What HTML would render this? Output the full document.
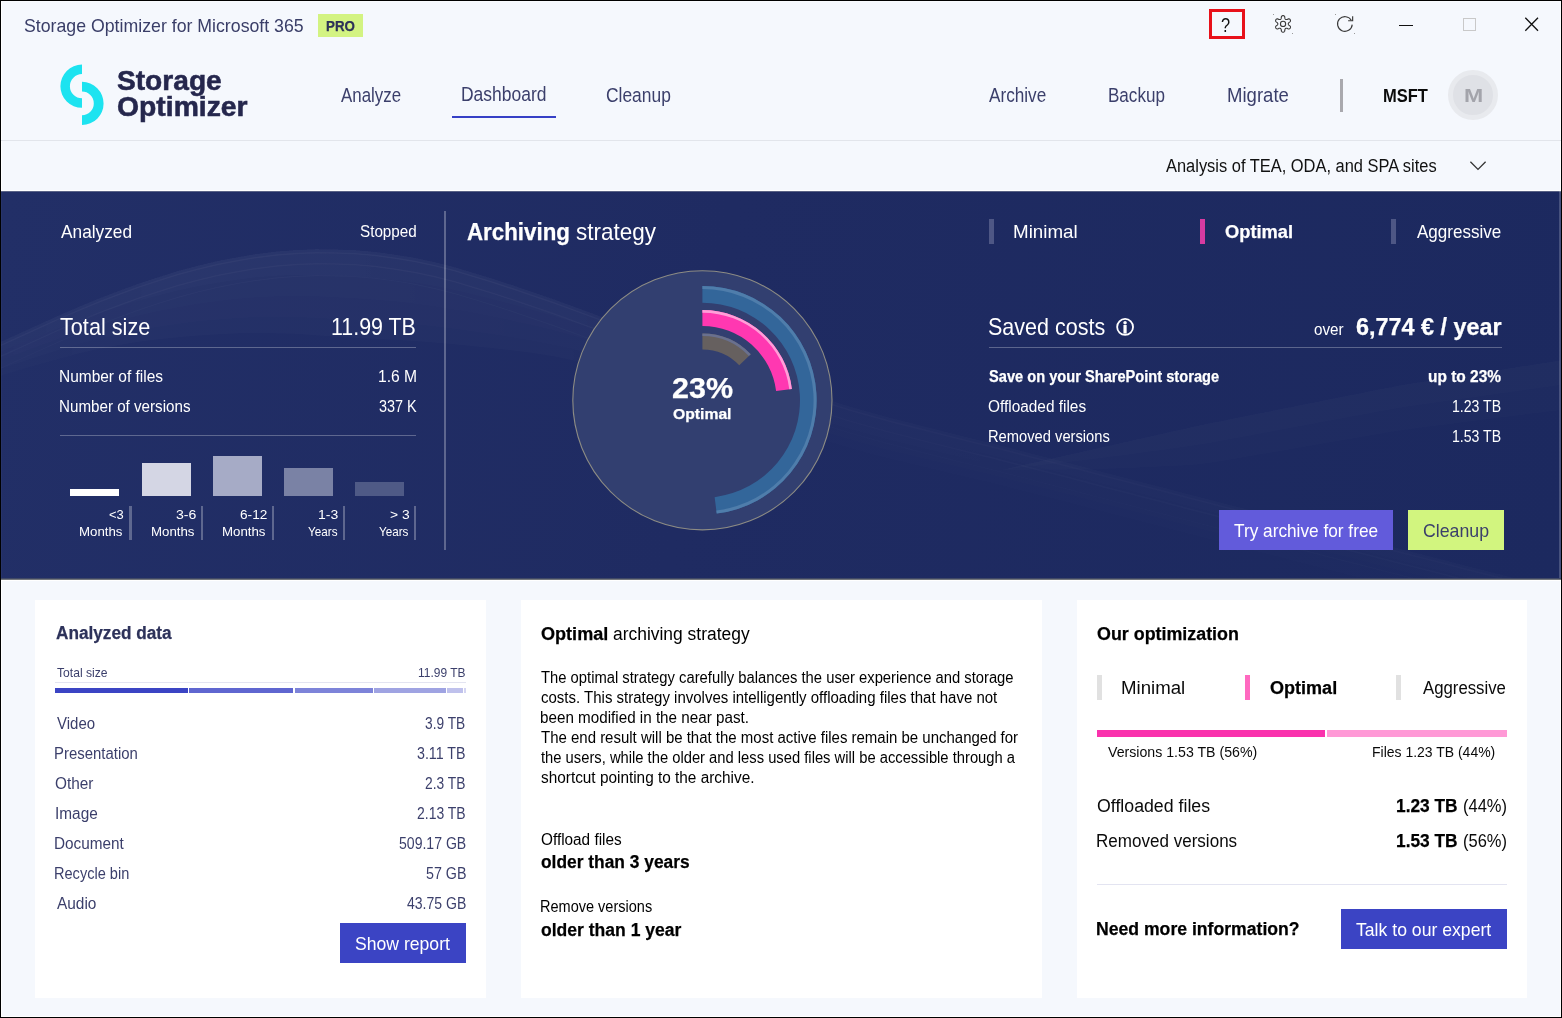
<!DOCTYPE html>
<html lang="en">
<head>
<meta charset="utf-8">
<title>Storage Optimizer for Microsoft 365</title>
<style>
*{box-sizing:border-box;margin:0;padding:0}
html,body{width:1562px;height:1018px;overflow:hidden;background:#f5f8fd}
body{font-family:"Liberation Sans",sans-serif}
#app{position:relative;width:1562px;height:1018px;background:#f5f8fd;overflow:hidden}
#frame{position:absolute;left:0;top:0;width:1562px;height:1018px;border:1px solid #000;z-index:50;pointer-events:none}
.t{position:absolute;white-space:nowrap;transform-origin:0 0;display:block;text-decoration:none}
.abs{position:absolute}
.hero{position:absolute;left:1px;top:191px;width:1560px;height:387px;background:linear-gradient(100deg,#222f67 0%,#1f2b62 45%,#1c295f 100%);overflow:hidden}
.card{position:absolute;background:#fff}
.btn{position:absolute}
</style>
</head>
<body>
<div id="app">
<div id="frame"></div>
<div class="abs" style="left:1px;top:1px;width:1560px;height:190px;border:1px solid #fff;border-top-color:#f9fbfe"></div>
<div class="abs" style="left:1px;top:580px;width:1560px;height:437px;border:1px solid #fff"></div>
<div class="abs" style="left:1px;top:578px;width:1560px;height:1px;background:#3f4866"></div>
<div class="abs" style="left:1px;top:579px;width:1560px;height:1px;background:#74777c"></div>

<header id="titlebar">
<div class="abs" style="left:318px;top:14px;width:45px;height:23px;background:#d3f382"></div>
<div class="abs" style="left:1209px;top:9px;width:36px;height:30px;border:3px solid #e8111a"></div>
<svg class="abs" style="left:1273px;top:14px" width="20" height="20" viewBox="0 0 20 20" fill="none" stroke="#3a3a3a" stroke-width="1.1"><path d="M10.05 1.60 L10.41 1.64 L10.76 1.75 L11.10 1.94 L11.41 2.21 L11.67 2.59 L11.80 3.38 L11.86 4.17 L12.00 4.55 L12.14 4.85 L12.30 5.08 L12.46 5.26 L12.65 5.40 L12.86 5.49 L13.10 5.54 L13.38 5.56 L13.71 5.54 L14.11 5.47 L14.82 5.13 L15.57 4.84 L16.03 4.88 L16.42 5.01 L16.75 5.21 L17.03 5.46 L17.24 5.75 L17.39 6.08 L17.47 6.44 L17.47 6.83 L17.39 7.23 L17.19 7.65 L16.57 8.15 L15.92 8.60 L15.65 8.91 L15.47 9.19 L15.35 9.44 L15.27 9.67 L15.25 9.90 L15.27 10.13 L15.35 10.36 L15.47 10.61 L15.65 10.89 L15.92 11.20 L16.57 11.65 L17.19 12.15 L17.39 12.57 L17.47 12.97 L17.47 13.36 L17.39 13.72 L17.24 14.05 L17.03 14.34 L16.75 14.59 L16.42 14.79 L16.03 14.92 L15.57 14.96 L14.82 14.67 L14.11 14.33 L13.71 14.26 L13.38 14.24 L13.10 14.26 L12.86 14.31 L12.65 14.40 L12.46 14.54 L12.30 14.72 L12.14 14.95 L12.00 15.25 L11.86 15.63 L11.80 16.42 L11.67 17.21 L11.41 17.59 L11.10 17.86 L10.76 18.05 L10.41 18.16 L10.05 18.20 L9.69 18.16 L9.34 18.05 L9.00 17.86 L8.69 17.59 L8.43 17.21 L8.30 16.42 L8.24 15.63 L8.10 15.25 L7.96 14.95 L7.80 14.72 L7.64 14.54 L7.45 14.40 L7.24 14.31 L7.00 14.26 L6.72 14.24 L6.39 14.26 L5.99 14.33 L5.28 14.67 L4.53 14.96 L4.07 14.92 L3.68 14.79 L3.35 14.59 L3.07 14.34 L2.86 14.05 L2.71 13.72 L2.63 13.36 L2.63 12.97 L2.71 12.57 L2.91 12.15 L3.53 11.65 L4.18 11.20 L4.45 10.89 L4.63 10.61 L4.75 10.36 L4.83 10.13 L4.85 9.90 L4.83 9.67 L4.75 9.44 L4.63 9.19 L4.45 8.91 L4.18 8.60 L3.53 8.15 L2.91 7.65 L2.71 7.23 L2.63 6.83 L2.63 6.44 L2.71 6.08 L2.86 5.75 L3.07 5.46 L3.35 5.21 L3.68 5.01 L4.07 4.88 L4.53 4.84 L5.28 5.13 L5.99 5.47 L6.39 5.54 L6.72 5.56 L7.00 5.54 L7.24 5.49 L7.45 5.40 L7.64 5.26 L7.80 5.08 L7.96 4.85 L8.10 4.55 L8.24 4.17 L8.30 3.38 L8.43 2.59 L8.69 2.21 L9.00 1.94 L9.34 1.75 L9.69 1.64 Z" stroke-linejoin="round"/><circle cx="10.05" cy="9.9" r="2.6"/></svg>
<svg class="abs" style="left:1335px;top:14px" width="20" height="20" viewBox="0 0 20 20" fill="none" stroke="#3a3a3a" stroke-width="1.15"><path d="M17.22 10.64 A7.35 7.35 0 1 1 16.39 6.55"/><path d="M13.1 6.75 L17.65 6.75 L17.65 2.3" stroke-linejoin="miter"/></svg>
<div class="abs" style="left:1399px;top:24.5px;width:14px;height:1.2px;background:#111"></div>
<div class="abs" style="left:1463px;top:18px;width:13px;height:13px;border:1px solid #c9c9c9"></div>
<svg class="abs" style="left:1524px;top:16px" width="16" height="16" viewBox="0 0 16 16" fill="none" stroke="#111" stroke-width="1.3"><path d="M1.3 1.7 L14 14.8 M14 1.7 L1.3 14.8"/></svg>
<div class="abs" style="left:1273px;top:14px;width:1px;height:1px;background:#9a9a9a"></div><div class="abs" style="left:1292px;top:33px;width:1px;height:1px;background:#9a9a9a"></div><div class="abs" style="left:1335px;top:14px;width:1px;height:1px;background:#9a9a9a"></div><div class="abs" style="left:1354px;top:33px;width:1px;height:1px;background:#9a9a9a"></div>
<span class="t" style="left:24.25px;top:15.00px;font-size:19px;line-height:21px;color:#3a3e68;transform:scaleX(0.9326)">Storage Optimizer for Microsoft 365</span>
<span class="t" style="left:325.97px;top:18.00px;font-size:14.5px;line-height:16px;color:#2c3158;transform:scaleX(0.9199);font-weight:700;-webkit-text-stroke:0.25px #2c3158">PRO</span>
<span class="t" style="left:1220.79px;top:14.00px;font-size:20.3px;line-height:22px;color:#111;transform:scaleX(0.8079)">?</span>
</header>

<nav id="nav">
<svg class="abs" style="left:56px;top:60px" width="52" height="70" viewBox="56 60 52 70"><path d="M82.00 107.80 A21.60 21.60 0 0 1 82.00 64.60 L82.00 74.10 A12.10 12.10 0 0 0 82.00 98.30 Z" fill="#1de3f0"/><path d="M82.00 81.80 A21.60 21.60 0 0 1 82.00 125.00 L82.00 115.20 A11.80 11.80 0 0 0 82.00 91.60 Z" fill="#1de3f0"/></svg>
<div class="abs" style="left:1448.2px;top:70px;width:50px;height:50px;border-radius:50%;background:#dfe1e6;border:5px solid #e8eaee"></div>
<span class="t" style="left:116.96px;top:63.60px;font-size:28.2px;line-height:32px;color:#25274d;transform:scaleX(0.9976);font-weight:700;-webkit-text-stroke:0.55px #25274d">Storage</span>
<span class="t" style="left:117.11px;top:90.20px;font-size:28.2px;line-height:32px;color:#25274d;transform:scaleX(1.0049);font-weight:700;-webkit-text-stroke:0.55px #25274d">Optimizer</span>
<a class="t" style="left:340.80px;top:85.00px;font-size:19.3px;line-height:21px;color:#3b3f6b;transform:scaleX(0.8751)">Analyze</a>
<a class="t" style="left:461.43px;top:83.80px;font-size:19.3px;line-height:21px;color:#3b3f6b;transform:scaleX(0.9061)">Dashboard</a>
<a class="t" style="left:606.48px;top:85.00px;font-size:19.3px;line-height:21px;color:#3b3f6b;transform:scaleX(0.9030)">Cleanup</a>
<a class="t" style="left:988.60px;top:85.00px;font-size:19.3px;line-height:21px;color:#3b3f6b;transform:scaleX(0.8903)">Archive</a>
<a class="t" style="left:1108.47px;top:85.00px;font-size:19.3px;line-height:21px;color:#3b3f6b;transform:scaleX(0.8843)">Backup</a>
<a class="t" style="left:1226.55px;top:85.00px;font-size:19.3px;line-height:21px;color:#3b3f6b;transform:scaleX(0.9619)">Migrate</a>
<span class="t" style="left:1382.77px;top:85.00px;font-size:18.8px;line-height:21px;color:#0b0b0b;transform:scaleX(0.8786);font-weight:700">MSFT</span>
<span class="t" style="left:1464.16px;top:85.00px;font-size:18.8px;line-height:21px;color:#a3a4ab;transform:scaleX(1.2285);font-weight:700">M</span>
<div class="abs" style="left:452px;top:116px;width:104px;height:2px;background:#3640c6"></div>
<div class="abs" style="left:1340.4px;top:79px;width:2.8px;height:33px;background:#a9a9ae"></div>
</nav>

<div class="abs" style="left:1px;top:140px;width:1560px;height:1px;background:#e2e5eb"></div>
<div id="subbar">
<span class="t" style="left:1166.00px;top:155.00px;font-size:18.8px;line-height:21px;color:#111;transform:scaleX(0.8749)">Analysis of TEA, ODA, and SPA sites</span>
<svg class="abs" style="left:1468px;top:159px" width="20" height="14" viewBox="0 0 20 14" fill="none" stroke="#333" stroke-width="1.3"><path d="M2.4 2.8 L10 10.4 L17.6 2.8"/></svg>
</div>

<section class="hero" id="hero"><svg class="abs" style="left:0;top:0" width="1559" height="387" viewBox="1 191 1559 387"><defs><linearGradient id="fl" x1="0" y1="0" x2="1" y2="0"><stop offset="0" stop-color="#fff" stop-opacity="0.8"/><stop offset="0.12" stop-color="#fff" stop-opacity="1"/><stop offset="0.36" stop-color="#fff" stop-opacity="0.9"/><stop offset="0.5" stop-color="#fff" stop-opacity="0.45"/><stop offset="1" stop-color="#fff" stop-opacity="0.4"/></linearGradient><mask id="mk"><rect x="0" y="180" width="1562" height="420" fill="url(#fl)"/></mask></defs><g mask="url(#mk)"><path d="M0.0 342.0 L19.8 332.9 L39.5 323.9 L59.3 315.1 L79.1 306.5 L98.9 298.3 L118.6 290.7 L138.4 283.5 L158.2 276.9 L177.9 270.8 L197.7 265.4 L217.5 260.8 L237.3 256.9 L257.0 253.7 L276.8 251.3 L296.6 249.7 L316.4 249.0 L336.1 249.2 L355.9 250.1 L375.7 251.8 L395.4 254.4 L415.2 257.7 L435.0 262.0 L454.8 267.1 L474.5 272.9 L494.3 279.0 L514.1 285.5 L533.8 292.2 L553.6 299.1 L573.4 306.2 L593.2 313.5 L612.9 321.0 L632.7 328.6 L652.5 336.3 L672.3 343.9 L692.0 351.4 L711.8 358.7 L731.6 366.0 L751.3 373.1 L771.1 380.1 L790.9 387.0 L810.7 393.8 L830.4 400.3 L850.2 406.4 L870.0 412.1 L889.7 417.5 L909.5 422.6 L929.3 427.5 L949.1 432.5 L968.8 437.4 L988.6 442.3 L1008.4 447.3 L1028.2 452.4 L1047.9 457.5 L1067.7 462.6 L1087.5 467.7 L1107.2 472.9 L1127.0 478.0 L1146.8 483.2 L1166.6 488.3 L1186.3 493.4 L1206.1 498.6 L1225.9 503.7 L1245.6 508.8 L1265.4 513.9 L1285.2 519.0 L1305.0 524.1 L1324.7 529.2 L1344.5 534.2 L1364.3 539.3 L1384.1 544.4 L1403.8 549.4 L1423.6 554.5 L1443.4 559.6 L1463.1 564.7 L1482.9 569.7 L1502.7 574.8 L1522.5 579.9 L1542.2 584.9 L1562.0 590.0 L1562.0 630.0 L1542.2 624.9 L1522.5 619.9 L1502.7 614.8 L1482.9 609.7 L1463.1 604.7 L1443.4 599.6 L1423.6 594.5 L1403.8 589.4 L1384.1 584.4 L1364.3 579.3 L1344.5 574.2 L1324.7 569.2 L1305.0 564.1 L1285.2 559.0 L1265.4 553.9 L1245.6 548.8 L1225.9 543.7 L1206.1 538.6 L1186.3 533.4 L1166.6 528.3 L1146.8 523.2 L1127.0 518.0 L1107.2 512.9 L1087.5 507.7 L1067.7 502.6 L1047.9 497.5 L1028.2 492.5 L1008.4 487.5 L988.6 482.6 L968.8 477.9 L949.1 473.2 L929.3 468.5 L909.5 463.8 L889.7 458.9 L870.0 453.9 L850.2 448.4 L830.4 442.5 L810.7 436.3 L790.9 429.8 L771.1 423.2 L751.3 416.5 L731.6 409.8 L711.8 403.1 L692.0 396.5 L672.3 389.9 L652.5 383.4 L632.7 377.0 L612.9 370.8 L593.2 365.2 L573.4 360.4 L553.6 356.4 L533.8 353.3 L514.1 350.7 L494.3 348.5 L474.5 346.4 L454.8 344.5 L435.0 342.7 L415.2 341.2 L395.4 340.1 L375.7 339.1 L355.9 338.1 L336.1 336.8 L316.4 335.4 L296.6 334.1 L276.8 333.4 L257.0 333.2 L237.3 333.5 L217.5 334.4 L197.7 335.7 L177.9 337.4 L158.2 339.5 L138.4 342.1 L118.6 345.2 L98.9 349.1 L79.1 353.6 L59.3 358.7 L39.5 364.3 L19.8 370.1 L0.0 376.0 Z" fill="#fff" fill-opacity="0.014"/><path d="M0.0 342.0 L19.8 332.9 L39.5 323.9 L59.3 315.1 L79.1 306.5 L98.9 298.3 L118.6 290.7 L138.4 283.5 L158.2 276.9 L177.9 270.8 L197.7 265.4 L217.5 260.8 L237.3 256.9 L257.0 253.7 L276.8 251.3 L296.6 249.7 L316.4 249.0 L336.1 249.2 L355.9 250.1 L375.7 251.8 L395.4 254.4 L415.2 257.7 L435.0 262.0 L454.8 267.1 L474.5 272.9 L494.3 279.0 L514.1 285.5 L533.8 292.2 L553.6 299.1 L573.4 306.2 L593.2 313.5 L612.9 321.0 L632.7 328.6 L652.5 336.3 L672.3 343.9 L692.0 351.4 L711.8 358.7 L731.6 366.0 L751.3 373.1 L771.1 380.1 L790.9 387.0 L810.7 393.8 L830.4 400.3 L850.2 406.4 L870.0 412.1 L889.7 417.5 L909.5 422.6 L929.3 427.5 L949.1 432.5 L968.8 437.4 L988.6 442.3 L1008.4 447.3 L1028.2 452.4 L1047.9 457.5 L1067.7 462.6 L1087.5 467.7 L1107.2 472.9 L1127.0 478.0 L1146.8 483.2 L1166.6 488.3 L1186.3 493.4 L1206.1 498.6 L1225.9 503.7 L1245.6 508.8 L1265.4 513.9 L1285.2 519.0 L1305.0 524.1 L1324.7 529.2 L1344.5 534.2 L1364.3 539.3 L1384.1 544.4 L1403.8 549.4 L1423.6 554.5 L1443.4 559.6 L1463.1 564.7 L1482.9 569.7 L1502.7 574.8 L1522.5 579.9 L1542.2 584.9 L1562.0 590.0 L1562.0 622.0 L1542.2 616.9 L1522.5 611.9 L1502.7 606.8 L1482.9 601.7 L1463.1 596.7 L1443.4 591.6 L1423.6 586.5 L1403.8 581.4 L1384.1 576.4 L1364.3 571.3 L1344.5 566.2 L1324.7 561.2 L1305.0 556.1 L1285.2 551.0 L1265.4 545.9 L1245.6 540.8 L1225.9 535.7 L1206.1 530.6 L1186.3 525.4 L1166.6 520.3 L1146.8 515.2 L1127.0 510.0 L1107.2 504.9 L1087.5 499.7 L1067.7 494.6 L1047.9 489.5 L1028.2 484.5 L1008.4 479.5 L988.6 474.6 L968.8 469.8 L949.1 465.0 L929.3 460.3 L909.5 455.5 L889.7 450.7 L870.0 445.5 L850.2 440.0 L830.4 434.1 L810.7 427.8 L790.9 421.2 L771.1 414.5 L751.3 407.8 L731.6 401.0 L711.8 394.2 L692.0 387.5 L672.3 380.7 L652.5 373.9 L632.7 367.3 L612.9 360.9 L593.2 354.9 L573.4 349.5 L553.6 345.0 L533.8 341.1 L514.1 337.7 L494.3 334.6 L474.5 331.7 L454.8 329.0 L435.0 326.6 L415.2 324.5 L395.4 323.0 L375.7 321.7 L355.9 320.5 L336.1 319.3 L316.4 318.1 L296.6 317.2 L276.8 316.9 L257.0 317.3 L237.3 318.2 L217.5 319.7 L197.7 321.6 L177.9 324.1 L158.2 327.0 L138.4 330.4 L118.6 334.3 L98.9 338.9 L79.1 344.2 L59.3 350.0 L39.5 356.2 L19.8 362.7 L0.0 369.2 Z" fill="#fff" fill-opacity="0.012"/><path d="M0.0 342.0 L19.8 332.9 L39.5 323.9 L59.3 315.1 L79.1 306.5 L98.9 298.3 L118.6 290.7 L138.4 283.5 L158.2 276.9 L177.9 270.8 L197.7 265.4 L217.5 260.8 L237.3 256.9 L257.0 253.7 L276.8 251.3 L296.6 249.7 L316.4 249.0 L336.1 249.2 L355.9 250.1 L375.7 251.8 L395.4 254.4 L415.2 257.7 L435.0 262.0 L454.8 267.1 L474.5 272.9 L494.3 279.0 L514.1 285.5 L533.8 292.2 L553.6 299.1 L573.4 306.2 L593.2 313.5 L612.9 321.0 L632.7 328.6 L652.5 336.3 L672.3 343.9 L692.0 351.4 L711.8 358.7 L731.6 366.0 L751.3 373.1 L771.1 380.1 L790.9 387.0 L810.7 393.8 L830.4 400.3 L850.2 406.4 L870.0 412.1 L889.7 417.5 L909.5 422.6 L929.3 427.5 L949.1 432.5 L968.8 437.4 L988.6 442.3 L1008.4 447.3 L1028.2 452.4 L1047.9 457.5 L1067.7 462.6 L1087.5 467.7 L1107.2 472.9 L1127.0 478.0 L1146.8 483.2 L1166.6 488.3 L1186.3 493.4 L1206.1 498.6 L1225.9 503.7 L1245.6 508.8 L1265.4 513.9 L1285.2 519.0 L1305.0 524.1 L1324.7 529.2 L1344.5 534.2 L1364.3 539.3 L1384.1 544.4 L1403.8 549.4 L1423.6 554.5 L1443.4 559.6 L1463.1 564.7 L1482.9 569.7 L1502.7 574.8 L1522.5 579.9 L1542.2 584.9 L1562.0 590.0 L1562.0 612.0 L1542.2 606.9 L1522.5 601.9 L1502.7 596.8 L1482.9 591.7 L1463.1 586.7 L1443.4 581.6 L1423.6 576.5 L1403.8 571.4 L1384.1 566.4 L1364.3 561.3 L1344.5 556.2 L1324.7 551.2 L1305.0 546.1 L1285.2 541.0 L1265.4 535.9 L1245.6 530.8 L1225.9 525.7 L1206.1 520.6 L1186.3 515.4 L1166.6 510.3 L1146.8 505.2 L1127.0 500.0 L1107.2 494.9 L1087.5 489.7 L1067.7 484.6 L1047.9 479.5 L1028.2 474.4 L1008.4 469.4 L988.6 464.5 L968.8 459.6 L949.1 454.8 L929.3 450.1 L909.5 445.2 L889.7 440.3 L870.0 435.1 L850.2 429.5 L830.4 423.5 L810.7 417.2 L790.9 410.5 L771.1 403.8 L751.3 396.9 L731.6 390.1 L711.8 383.1 L692.0 376.2 L672.3 369.2 L652.5 362.2 L632.7 355.2 L612.9 348.4 L593.2 341.9 L573.4 336.0 L553.6 330.6 L533.8 325.8 L514.1 321.4 L494.3 317.2 L474.5 313.3 L454.8 309.7 L435.0 306.4 L415.2 303.7 L395.4 301.5 L375.7 299.9 L355.9 298.5 L336.1 297.4 L316.4 296.5 L296.6 296.1 L276.8 296.4 L257.0 297.4 L237.3 299.0 L217.5 301.3 L197.7 304.1 L177.9 307.4 L158.2 311.3 L138.4 315.7 L118.6 320.7 L98.9 326.2 L79.1 332.4 L59.3 339.1 L39.5 346.1 L19.8 353.4 L0.0 360.7 Z" fill="#fff" fill-opacity="0.012"/><path d="M0.0 342.0 L19.8 332.9 L39.5 323.9 L59.3 315.1 L79.1 306.5 L98.9 298.3 L118.6 290.7 L138.4 283.5 L158.2 276.9 L177.9 270.8 L197.7 265.4 L217.5 260.8 L237.3 256.9 L257.0 253.7 L276.8 251.3 L296.6 249.7 L316.4 249.0 L336.1 249.2 L355.9 250.1 L375.7 251.8 L395.4 254.4 L415.2 257.7 L435.0 262.0 L454.8 267.1 L474.5 272.9 L494.3 279.0 L514.1 285.5 L533.8 292.2 L553.6 299.1 L573.4 306.2 L593.2 313.5 L612.9 321.0 L632.7 328.6 L652.5 336.3 L672.3 343.9 L692.0 351.4 L711.8 358.7 L731.6 366.0 L751.3 373.1 L771.1 380.1 L790.9 387.0 L810.7 393.8 L830.4 400.3 L850.2 406.4 L870.0 412.1 L889.7 417.5 L909.5 422.6 L929.3 427.5 L949.1 432.5 L968.8 437.4 L988.6 442.3 L1008.4 447.3 L1028.2 452.4 L1047.9 457.5 L1067.7 462.6 L1087.5 467.7 L1107.2 472.9 L1127.0 478.0 L1146.8 483.2 L1166.6 488.3 L1186.3 493.4 L1206.1 498.6 L1225.9 503.7 L1245.6 508.8 L1265.4 513.9 L1285.2 519.0 L1305.0 524.1 L1324.7 529.2 L1344.5 534.2 L1364.3 539.3 L1384.1 544.4 L1403.8 549.4 L1423.6 554.5 L1443.4 559.6 L1463.1 564.7 L1482.9 569.7 L1502.7 574.8 L1522.5 579.9 L1542.2 584.9 L1562.0 590.0 L1562.0 602.0 L1542.2 596.9 L1522.5 591.9 L1502.7 586.8 L1482.9 581.7 L1463.1 576.7 L1443.4 571.6 L1423.6 566.5 L1403.8 561.4 L1384.1 556.4 L1364.3 551.3 L1344.5 546.2 L1324.7 541.2 L1305.0 536.1 L1285.2 531.0 L1265.4 525.9 L1245.6 520.8 L1225.9 515.7 L1206.1 510.6 L1186.3 505.4 L1166.6 500.3 L1146.8 495.2 L1127.0 490.0 L1107.2 484.9 L1087.5 479.7 L1067.7 474.6 L1047.9 469.5 L1028.2 464.4 L1008.4 459.4 L988.6 454.4 L968.8 449.5 L949.1 444.7 L929.3 439.8 L909.5 434.9 L889.7 429.9 L870.0 424.6 L850.2 419.0 L830.4 412.9 L810.7 406.5 L790.9 399.8 L771.1 393.0 L751.3 386.1 L731.6 379.1 L711.8 372.1 L692.0 364.9 L672.3 357.7 L652.5 350.4 L632.7 343.1 L612.9 336.0 L593.2 329.0 L573.4 322.4 L553.6 316.3 L533.8 310.5 L514.1 305.1 L494.3 299.9 L474.5 294.9 L454.8 290.3 L435.0 286.2 L415.2 282.8 L395.4 280.1 L375.7 278.0 L355.9 276.5 L336.1 275.5 L316.4 274.9 L296.6 275.0 L276.8 275.9 L257.0 277.5 L237.3 279.9 L217.5 282.9 L197.7 286.5 L177.9 290.8 L158.2 295.7 L138.4 301.1 L118.6 307.0 L98.9 313.6 L79.1 320.6 L59.3 328.2 L39.5 336.0 L19.8 344.1 L0.0 352.2 Z" fill="#fff" fill-opacity="0.012"/><path d="M0.0 345.0 L19.8 335.9 L39.5 326.9 L59.3 318.1 L79.1 309.5 L98.9 301.3 L118.6 293.7 L138.4 286.5 L158.2 279.9 L177.9 273.8 L197.7 268.4 L217.5 263.8 L237.3 259.9 L257.0 256.7 L276.8 254.3 L296.6 252.7 L316.4 252.0 L336.1 252.2 L355.9 253.1 L375.7 254.8 L395.4 257.4 L415.2 260.7 L435.0 265.0 L454.8 270.1 L474.5 275.9 L494.3 282.0 L514.1 288.5 L533.8 295.2 L553.6 302.1 L573.4 309.2 L593.2 316.5 L612.9 324.0 L632.7 331.6 L652.5 339.3 L672.3 346.9 L692.0 354.4 L711.8 361.7 L731.6 369.0 L751.3 376.1 L771.1 383.1 L790.9 390.0 L810.7 396.8 L830.4 403.3 L850.2 409.4 L870.0 415.1 L889.7 420.5 L909.5 425.6 L929.3 430.5 L949.1 435.5 L968.8 440.4 L988.6 445.3 L1008.4 450.3 L1028.2 455.4 L1047.9 460.5 L1067.7 465.6 L1087.5 470.7 L1107.2 475.9 L1127.0 481.0 L1146.8 486.2 L1166.6 491.3 L1186.3 496.4 L1206.1 501.6 L1225.9 506.7 L1245.6 511.8 L1265.4 516.9 L1285.2 522.0 L1305.0 527.1 L1324.7 532.2 L1344.5 537.2 L1364.3 542.3 L1384.1 547.4 L1403.8 552.4 L1423.6 557.5 L1443.4 562.6 L1463.1 567.7 L1482.9 572.7 L1502.7 577.8 L1522.5 582.9 L1542.2 587.9 L1562.0 593.0 L1562.0 594.5 L1542.2 589.4 L1522.5 584.4 L1502.7 579.3 L1482.9 574.2 L1463.1 569.2 L1443.4 564.1 L1423.6 559.0 L1403.8 553.9 L1384.1 548.9 L1364.3 543.8 L1344.5 538.7 L1324.7 533.7 L1305.0 528.6 L1285.2 523.5 L1265.4 518.4 L1245.6 513.3 L1225.9 508.2 L1206.1 503.1 L1186.3 497.9 L1166.6 492.8 L1146.8 487.7 L1127.0 482.5 L1107.2 477.4 L1087.5 472.2 L1067.7 467.1 L1047.9 462.0 L1028.2 456.9 L1008.4 451.8 L988.6 446.8 L968.8 441.9 L949.1 437.0 L929.3 432.0 L909.5 427.1 L889.7 422.0 L870.0 416.6 L850.2 410.9 L830.4 404.8 L810.7 398.3 L790.9 391.5 L771.1 384.6 L751.3 377.6 L731.6 370.5 L711.8 363.2 L692.0 355.9 L672.3 348.4 L652.5 340.8 L632.7 333.1 L612.9 325.5 L593.2 318.0 L573.4 310.7 L553.6 303.6 L533.8 296.7 L514.1 290.0 L494.3 283.5 L474.5 277.4 L454.8 271.6 L435.0 266.5 L415.2 262.2 L395.4 258.9 L375.7 256.3 L355.9 254.6 L336.1 253.7 L316.4 253.5 L296.6 254.2 L276.8 255.8 L257.0 258.2 L237.3 261.4 L217.5 265.3 L197.7 269.9 L177.9 275.3 L158.2 281.4 L138.4 288.0 L118.6 295.2 L98.9 302.8 L79.1 311.0 L59.3 319.6 L39.5 328.4 L19.8 337.4 L0.0 346.5 Z" fill="#fff" fill-opacity="0.035"/><path d="M0.0 356.0 L19.8 346.9 L39.5 337.9 L59.3 329.1 L79.1 320.5 L98.9 312.3 L118.6 304.7 L138.4 297.5 L158.2 290.9 L177.9 284.8 L197.7 279.4 L217.5 274.8 L237.3 270.9 L257.0 267.7 L276.8 265.3 L296.6 263.7 L316.4 263.0 L336.1 263.2 L355.9 264.1 L375.7 265.8 L395.4 268.4 L415.2 271.7 L435.0 276.0 L454.8 281.1 L474.5 286.9 L494.3 293.0 L514.1 299.5 L533.8 306.2 L553.6 313.1 L573.4 320.2 L593.2 327.5 L612.9 335.0 L632.7 342.6 L652.5 350.3 L672.3 357.9 L692.0 365.4 L711.8 372.7 L731.6 380.0 L751.3 387.1 L771.1 394.1 L790.9 401.0 L810.7 407.8 L830.4 414.3 L850.2 420.4 L870.0 426.1 L889.7 431.5 L909.5 436.6 L929.3 441.5 L949.1 446.5 L968.8 451.4 L988.6 456.3 L1008.4 461.3 L1028.2 466.4 L1047.9 471.5 L1067.7 476.6 L1087.5 481.7 L1107.2 486.9 L1127.0 492.0 L1146.8 497.2 L1166.6 502.3 L1186.3 507.4 L1206.1 512.6 L1225.9 517.7 L1245.6 522.8 L1265.4 527.9 L1285.2 533.0 L1305.0 538.1 L1324.7 543.2 L1344.5 548.2 L1364.3 553.3 L1384.1 558.4 L1403.8 563.4 L1423.6 568.5 L1443.4 573.6 L1463.1 578.7 L1482.9 583.7 L1502.7 588.8 L1522.5 593.9 L1542.2 598.9 L1562.0 604.0 L1562.0 605.5 L1542.2 600.4 L1522.5 595.4 L1502.7 590.3 L1482.9 585.2 L1463.1 580.2 L1443.4 575.1 L1423.6 570.0 L1403.8 564.9 L1384.1 559.9 L1364.3 554.8 L1344.5 549.7 L1324.7 544.7 L1305.0 539.6 L1285.2 534.5 L1265.4 529.4 L1245.6 524.3 L1225.9 519.2 L1206.1 514.1 L1186.3 508.9 L1166.6 503.8 L1146.8 498.7 L1127.0 493.5 L1107.2 488.4 L1087.5 483.2 L1067.7 478.1 L1047.9 473.0 L1028.2 467.9 L1008.4 462.8 L988.6 457.8 L968.8 452.9 L949.1 448.0 L929.3 443.0 L909.5 438.1 L889.7 433.0 L870.0 427.6 L850.2 421.9 L830.4 415.8 L810.7 409.3 L790.9 402.5 L771.1 395.6 L751.3 388.6 L731.6 381.5 L711.8 374.2 L692.0 366.9 L672.3 359.4 L652.5 351.8 L632.7 344.1 L612.9 336.5 L593.2 329.0 L573.4 321.7 L553.6 314.6 L533.8 307.7 L514.1 301.0 L494.3 294.5 L474.5 288.4 L454.8 282.6 L435.0 277.5 L415.2 273.2 L395.4 269.9 L375.7 267.3 L355.9 265.6 L336.1 264.7 L316.4 264.5 L296.6 265.2 L276.8 266.8 L257.0 269.2 L237.3 272.4 L217.5 276.3 L197.7 280.9 L177.9 286.3 L158.2 292.4 L138.4 299.0 L118.6 306.2 L98.9 313.8 L79.1 322.0 L59.3 330.6 L39.5 339.4 L19.8 348.4 L0.0 357.5 Z" fill="#fff" fill-opacity="0.03"/><path d="M0.0 368.0 L19.8 358.9 L39.5 349.9 L59.3 341.1 L79.1 332.5 L98.9 324.3 L118.6 316.7 L138.4 309.5 L158.2 302.9 L177.9 296.8 L197.7 291.4 L217.5 286.8 L237.3 282.9 L257.0 279.7 L276.8 277.3 L296.6 275.7 L316.4 275.0 L336.1 275.2 L355.9 276.1 L375.7 277.8 L395.4 280.4 L415.2 283.7 L435.0 288.0 L454.8 293.1 L474.5 298.9 L494.3 305.0 L514.1 311.5 L533.8 318.2 L553.6 325.1 L573.4 332.2 L593.2 339.5 L612.9 347.0 L632.7 354.6 L652.5 362.3 L672.3 369.9 L692.0 377.4 L711.8 384.7 L731.6 392.0 L751.3 399.1 L771.1 406.1 L790.9 413.0 L810.7 419.8 L830.4 426.3 L850.2 432.4 L870.0 438.1 L889.7 443.5 L909.5 448.6 L929.3 453.5 L949.1 458.5 L968.8 463.4 L988.6 468.3 L1008.4 473.3 L1028.2 478.4 L1047.9 483.5 L1067.7 488.6 L1087.5 493.7 L1107.2 498.9 L1127.0 504.0 L1146.8 509.2 L1166.6 514.3 L1186.3 519.4 L1206.1 524.6 L1225.9 529.7 L1245.6 534.8 L1265.4 539.9 L1285.2 545.0 L1305.0 550.1 L1324.7 555.2 L1344.5 560.2 L1364.3 565.3 L1384.1 570.4 L1403.8 575.4 L1423.6 580.5 L1443.4 585.6 L1463.1 590.7 L1482.9 595.7 L1502.7 600.8 L1522.5 605.9 L1542.2 610.9 L1562.0 616.0 L1562.0 617.2 L1542.2 612.1 L1522.5 607.1 L1502.7 602.0 L1482.9 596.9 L1463.1 591.9 L1443.4 586.8 L1423.6 581.7 L1403.8 576.6 L1384.1 571.6 L1364.3 566.5 L1344.5 561.4 L1324.7 556.4 L1305.0 551.3 L1285.2 546.2 L1265.4 541.1 L1245.6 536.0 L1225.9 530.9 L1206.1 525.8 L1186.3 520.6 L1166.6 515.5 L1146.8 510.4 L1127.0 505.2 L1107.2 500.1 L1087.5 494.9 L1067.7 489.8 L1047.9 484.7 L1028.2 479.6 L1008.4 474.5 L988.6 469.5 L968.8 464.6 L949.1 459.7 L929.3 454.7 L909.5 449.8 L889.7 444.7 L870.0 439.3 L850.2 433.6 L830.4 427.5 L810.7 421.0 L790.9 414.2 L771.1 407.3 L751.3 400.3 L731.6 393.2 L711.8 385.9 L692.0 378.6 L672.3 371.1 L652.5 363.5 L632.7 355.8 L612.9 348.2 L593.2 340.7 L573.4 333.4 L553.6 326.3 L533.8 319.4 L514.1 312.7 L494.3 306.2 L474.5 300.1 L454.8 294.3 L435.0 289.2 L415.2 284.9 L395.4 281.6 L375.7 279.0 L355.9 277.3 L336.1 276.4 L316.4 276.2 L296.6 276.9 L276.8 278.5 L257.0 280.9 L237.3 284.1 L217.5 288.0 L197.7 292.6 L177.9 298.0 L158.2 304.1 L138.4 310.7 L118.6 317.9 L98.9 325.5 L79.1 333.7 L59.3 342.3 L39.5 351.1 L19.8 360.1 L0.0 369.2 Z" fill="#fff" fill-opacity="0.025"/></g><path d="M1000.0 470.0 L1007.1 468.4 L1014.2 466.8 L1021.3 465.2 L1028.5 463.6 L1035.6 462.0 L1042.7 460.4 L1049.8 458.8 L1056.9 457.2 L1064.0 455.6 L1071.1 454.0 L1078.3 452.4 L1085.4 450.8 L1092.5 449.2 L1099.6 447.6 L1106.7 446.0 L1113.8 444.4 L1120.9 442.8 L1128.1 441.2 L1135.2 439.6 L1142.3 438.0 L1149.4 436.4 L1156.5 434.8 L1163.6 433.2 L1170.7 431.6 L1177.8 430.0 L1185.0 428.4 L1192.1 426.8 L1199.2 425.3 L1206.3 423.8 L1213.4 422.3 L1220.5 420.9 L1227.6 419.5 L1234.8 418.0 L1241.9 416.6 L1249.0 415.2 L1256.1 413.8 L1263.2 412.4 L1270.3 410.9 L1277.4 409.5 L1284.6 408.1 L1291.7 406.7 L1298.8 405.2 L1305.9 403.8 L1313.0 402.4 L1320.1 401.0 L1327.2 399.6 L1334.4 398.1 L1341.5 396.7 L1348.6 395.3 L1355.7 393.9 L1362.8 392.4 L1369.9 391.0 L1377.0 389.6 L1384.2 388.2 L1391.3 386.9 L1398.4 385.5 L1405.5 384.3 L1412.6 383.1 L1419.7 382.0 L1426.8 380.9 L1433.9 379.8 L1441.1 378.7 L1448.2 377.6 L1455.3 376.5 L1462.4 375.4 L1469.5 374.3 L1476.6 373.2 L1483.7 372.1 L1490.9 371.0 L1498.0 369.9 L1505.1 368.8 L1512.2 367.7 L1519.3 366.6 L1526.4 365.5 L1533.5 364.4 L1540.7 363.3 L1547.8 362.2 L1554.9 361.1 L1562.0 360.0 L1562.0 410.0 L1554.9 410.9 L1547.8 411.8 L1540.7 412.7 L1533.5 413.6 L1526.4 414.5 L1519.3 415.4 L1512.2 416.3 L1505.1 417.2 L1498.0 418.1 L1490.9 419.0 L1483.7 419.9 L1476.6 420.8 L1469.5 421.7 L1462.4 422.6 L1455.3 423.5 L1448.2 424.4 L1441.1 425.3 L1433.9 426.2 L1426.8 427.1 L1419.7 428.1 L1412.6 429.0 L1405.5 430.0 L1398.4 431.0 L1391.3 432.1 L1384.2 433.3 L1377.0 434.5 L1369.9 435.7 L1362.8 436.9 L1355.7 438.2 L1348.6 439.4 L1341.5 440.6 L1334.4 441.8 L1327.2 443.1 L1320.1 444.3 L1313.0 445.5 L1305.9 446.7 L1298.8 448.0 L1291.7 449.2 L1284.6 450.4 L1277.4 451.7 L1270.3 452.9 L1263.2 454.1 L1256.1 455.3 L1249.0 456.6 L1241.9 457.8 L1234.8 459.0 L1227.6 460.2 L1220.5 461.4 L1213.4 462.5 L1206.3 463.5 L1199.2 464.4 L1192.1 465.0 L1185.0 465.5 L1177.8 466.0 L1170.7 466.3 L1163.6 466.6 L1156.5 467.0 L1149.4 467.3 L1142.3 467.6 L1135.2 467.9 L1128.1 468.2 L1120.9 468.5 L1113.8 468.8 L1106.7 469.1 L1099.6 469.3 L1092.5 469.4 L1085.4 469.5 L1078.3 469.6 L1071.1 469.6 L1064.0 469.7 L1056.9 469.7 L1049.8 469.8 L1042.7 469.8 L1035.6 469.8 L1028.5 469.9 L1021.3 469.9 L1014.2 469.9 L1007.1 470.0 L1000.0 470.0 Z" fill="#fff" fill-opacity="0.012"/><path d="M1000.0 470.0 L1007.1 468.4 L1014.2 466.8 L1021.3 465.2 L1028.5 463.6 L1035.6 462.0 L1042.7 460.4 L1049.8 458.8 L1056.9 457.2 L1064.0 455.6 L1071.1 454.0 L1078.3 452.4 L1085.4 450.8 L1092.5 449.2 L1099.6 447.6 L1106.7 446.0 L1113.8 444.4 L1120.9 442.8 L1128.1 441.2 L1135.2 439.6 L1142.3 438.0 L1149.4 436.4 L1156.5 434.8 L1163.6 433.2 L1170.7 431.6 L1177.8 430.0 L1185.0 428.4 L1192.1 426.8 L1199.2 425.3 L1206.3 423.8 L1213.4 422.3 L1220.5 420.9 L1227.6 419.5 L1234.8 418.0 L1241.9 416.6 L1249.0 415.2 L1256.1 413.8 L1263.2 412.4 L1270.3 410.9 L1277.4 409.5 L1284.6 408.1 L1291.7 406.7 L1298.8 405.2 L1305.9 403.8 L1313.0 402.4 L1320.1 401.0 L1327.2 399.6 L1334.4 398.1 L1341.5 396.7 L1348.6 395.3 L1355.7 393.9 L1362.8 392.4 L1369.9 391.0 L1377.0 389.6 L1384.2 388.2 L1391.3 386.9 L1398.4 385.5 L1405.5 384.3 L1412.6 383.1 L1419.7 382.0 L1426.8 380.9 L1433.9 379.8 L1441.1 378.7 L1448.2 377.6 L1455.3 376.5 L1462.4 375.4 L1469.5 374.3 L1476.6 373.2 L1483.7 372.1 L1490.9 371.0 L1498.0 369.9 L1505.1 368.8 L1512.2 367.7 L1519.3 366.6 L1526.4 365.5 L1533.5 364.4 L1540.7 363.3 L1547.8 362.2 L1554.9 361.1 L1562.0 360.0 L1562.0 385.0 L1554.9 386.0 L1547.8 387.0 L1540.7 388.0 L1533.5 389.0 L1526.4 390.0 L1519.3 391.0 L1512.2 392.0 L1505.1 393.0 L1498.0 394.0 L1490.9 395.0 L1483.7 396.0 L1476.6 397.0 L1469.5 398.0 L1462.4 399.0 L1455.3 400.0 L1448.2 401.0 L1441.1 402.0 L1433.9 403.0 L1426.8 404.0 L1419.7 405.0 L1412.6 406.1 L1405.5 407.1 L1398.4 408.3 L1391.3 409.5 L1384.2 410.8 L1377.0 412.1 L1369.9 413.4 L1362.8 414.7 L1355.7 416.0 L1348.6 417.3 L1341.5 418.7 L1334.4 420.0 L1327.2 421.3 L1320.1 422.6 L1313.0 424.0 L1305.9 425.3 L1298.8 426.6 L1291.7 427.9 L1284.6 429.3 L1277.4 430.6 L1270.3 431.9 L1263.2 433.2 L1256.1 434.6 L1249.0 435.9 L1241.9 437.2 L1234.8 438.5 L1227.6 439.8 L1220.5 441.2 L1213.4 442.4 L1206.3 443.7 L1199.2 444.8 L1192.1 445.9 L1185.0 447.0 L1177.8 448.0 L1170.7 448.9 L1163.6 449.9 L1156.5 450.9 L1149.4 451.8 L1142.3 452.8 L1135.2 453.8 L1128.1 454.7 L1120.9 455.7 L1113.8 456.6 L1106.7 457.5 L1099.6 458.4 L1092.5 459.3 L1085.4 460.2 L1078.3 461.0 L1071.1 461.8 L1064.0 462.6 L1056.9 463.5 L1049.8 464.3 L1042.7 465.1 L1035.6 465.9 L1028.5 466.7 L1021.3 467.5 L1014.2 468.4 L1007.1 469.2 L1000.0 470.0 Z" fill="#fff" fill-opacity="0.012"/></svg><div class="abs" style="left:0;top:0;width:1560px;height:1px;background:rgba(160,165,175,0.45)"></div><div class="abs" style="left:1557.6px;top:0;width:2.4px;height:387px;background:rgba(255,255,255,0.19)"></div><div class="abs" style="left:0;top:0;width:1px;height:387px;background:rgba(255,255,255,0.03)"></div></section>
<section id="hero-left">
<span class="t" style="left:61.40px;top:220.80px;font-size:19px;line-height:21px;color:#fff;transform:scaleX(0.9093)">Analyzed</span>
<span class="t" style="left:359.92px;top:223.20px;font-size:16px;line-height:17px;color:#fff;transform:scaleX(0.9517)">Stopped</span>
<span class="t" style="left:60.46px;top:313.70px;font-size:23.2px;line-height:26px;color:#fff;transform:scaleX(0.9339)">Total size</span>
<span class="t" style="left:330.96px;top:313.70px;font-size:23.2px;line-height:26px;color:#fff;transform:scaleX(0.9233)">11.99 TB</span>
<span class="t" style="left:58.99px;top:368.40px;font-size:16px;line-height:17px;color:#fff;transform:scaleX(0.9665)">Number of files</span>
<span class="t" style="left:378.12px;top:368.40px;font-size:16px;line-height:17px;color:#fff;transform:scaleX(0.9779)">1.6 M</span>
<span class="t" style="left:59.02px;top:398.20px;font-size:16px;line-height:17px;color:#fff;transform:scaleX(0.9477)">Number of versions</span>
<span class="t" style="left:378.65px;top:398.20px;font-size:16px;line-height:17px;color:#fff;transform:scaleX(0.9018)">337 K</span>
<span class="t" style="left:109.38px;top:507.90px;font-size:12.6px;line-height:14px;color:#fff;transform:scaleX(1.0258)">&lt;3</span>
<span class="t" style="left:79.15px;top:525.00px;font-size:12.6px;line-height:14px;color:#fff;transform:scaleX(1.0534)">Months</span>
<span class="t" style="left:175.50px;top:507.90px;font-size:12.6px;line-height:14px;color:#fff;transform:scaleX(1.1186)">3-6</span>
<span class="t" style="left:151.15px;top:525.00px;font-size:12.6px;line-height:14px;color:#fff;transform:scaleX(1.0534)">Months</span>
<span class="t" style="left:239.95px;top:507.90px;font-size:12.6px;line-height:14px;color:#fff;transform:scaleX(1.0828)">6-12</span>
<span class="t" style="left:222.15px;top:525.00px;font-size:12.6px;line-height:14px;color:#fff;transform:scaleX(1.0534)">Months</span>
<span class="t" style="left:317.95px;top:507.90px;font-size:12.6px;line-height:14px;color:#fff;transform:scaleX(1.1102)">1-3</span>
<span class="t" style="left:307.97px;top:525.00px;font-size:12.6px;line-height:14px;color:#fff;transform:scaleX(0.9305)">Years</span>
<span class="t" style="left:389.54px;top:507.90px;font-size:12.6px;line-height:14px;color:#fff;transform:scaleX(1.0979)">&gt; 3</span>
<span class="t" style="left:378.97px;top:525.00px;font-size:12.6px;line-height:14px;color:#fff;transform:scaleX(0.9273)">Years</span>
<div class="abs" style="left:60.20px;top:347.00px;width:355.80px;height:1.00px;background:rgba(255,255,255,0.28)"></div>
<div class="abs" style="left:60.20px;top:435.00px;width:355.80px;height:1.00px;background:rgba(255,255,255,0.28)"></div>
<div class="abs" style="left:69.80px;top:489.00px;width:49.20px;height:7.00px;background:#ffffff"></div>
<div class="abs" style="left:141.90px;top:462.80px;width:49.20px;height:33.20px;background:#d4d6e4"></div>
<div class="abs" style="left:212.90px;top:455.80px;width:49.20px;height:40.20px;background:#a6abc6"></div>
<div class="abs" style="left:283.90px;top:468.00px;width:49.10px;height:28.00px;background:#7a82a5"></div>
<div class="abs" style="left:354.90px;top:482.00px;width:49.10px;height:14.00px;background:#4f5a86"></div>
<div class="abs" style="left:129.30px;top:505.80px;width:2.30px;height:34.20px;background:rgba(255,255,255,0.28)"></div>
<div class="abs" style="left:200.50px;top:505.80px;width:2.30px;height:34.20px;background:rgba(255,255,255,0.28)"></div>
<div class="abs" style="left:271.50px;top:505.80px;width:2.30px;height:34.20px;background:rgba(255,255,255,0.28)"></div>
<div class="abs" style="left:342.50px;top:505.80px;width:2.30px;height:34.20px;background:rgba(255,255,255,0.28)"></div>
<div class="abs" style="left:413.50px;top:505.80px;width:2.30px;height:34.20px;background:rgba(255,255,255,0.28)"></div>
<div class="abs" style="left:444.00px;top:211.30px;width:2.00px;height:338.70px;background:rgba(255,255,255,0.28)"></div>
</section>
<section id="hero-mid">
<svg class="abs" style="left:560px;top:260px" width="290" height="280" viewBox="560 260 290 280">
<circle cx="702.4" cy="400.3" r="129.6" fill="#323f70" stroke="#8d8c84" stroke-width="1.1"/>
<path d="M702.40 286.10 A114.20 114.20 0 0 1 716.71 513.60 L714.63 497.13 A97.60 97.60 0 0 0 702.40 302.70 Z" fill="#33669a"/>
<path d="M702.40 286.10 A114.20 114.20 0 0 1 716.71 513.60 L716.34 510.62 A111.20 111.20 0 0 0 702.40 289.10 Z" fill="#4f7dab"/>
<path d="M702.40 310.10 A90.20 90.20 0 0 1 791.89 388.99 L776.11 390.99 A74.30 74.30 0 0 0 702.40 326.00 Z" fill="#ff38b1"/>
<path d="M702.40 310.10 A90.20 90.20 0 0 1 791.89 388.99 L789.31 389.32 A87.60 87.60 0 0 0 702.40 312.70 Z" fill="#ff9fd8"/>
<path d="M702.40 333.50 A66.80 66.80 0 0 1 750.77 354.23 L739.26 365.20 A50.90 50.90 0 0 0 702.40 349.40 Z" fill="#66605f"/>
<path d="M702.40 333.50 A66.80 66.80 0 0 1 750.77 354.23 L748.89 356.03 A64.20 64.20 0 0 0 702.40 336.10 Z" fill="#69708f"/>
</svg>
<span class="t" style="left:466.95px;top:218.80px;font-size:23.2px;line-height:26px;color:#fff;transform:scaleX(0.9625);font-weight:700;-webkit-text-stroke:0.25px #fff">Archiving</span>
<span class="t" style="left:575.85px;top:218.80px;font-size:23.2px;line-height:26px;color:#fff;transform:scaleX(0.9700)">strategy</span>
<span class="t" style="left:671.65px;top:370.60px;font-size:30px;line-height:33px;color:#fff;transform:scaleX(1.0156);font-weight:700;-webkit-text-stroke:0.25px #fff">23%</span>
<span class="t" style="left:673.31px;top:404.90px;font-size:15.4px;line-height:17px;color:#fff;transform:scaleX(1.0208);font-weight:700;-webkit-text-stroke:0.25px #fff">Optimal</span>
</section>
<section id="hero-right">
<div class="abs" style="left:988.60px;top:219.00px;width:5.40px;height:24.70px;background:#4e5785"></div>
<div class="abs" style="left:1199.80px;top:219.00px;width:5.40px;height:24.70px;background:#d63ba1"></div>
<div class="abs" style="left:1391.00px;top:219.00px;width:5.20px;height:24.70px;background:#4e5785"></div>
<div class="abs" style="left:988.60px;top:347.00px;width:513.40px;height:1.00px;background:rgba(255,255,255,0.28)"></div>
<svg class="abs" style="left:1114px;top:316px" width="22" height="22" viewBox="1114 316 22 22"><circle cx="1125.1" cy="326.9" r="7.95" fill="none" stroke="#fff" stroke-width="1.8"/><circle cx="1125.05" cy="322.75" r="1.75" fill="#fff"/><rect x="1123.45" y="325" width="3.2" height="8.6" fill="#fff"/></svg>
<div class="abs" style="left:1219.20px;top:510.00px;width:173.90px;height:39.80px;background:#625bdb"></div>
<div class="abs" style="left:1408.20px;top:510.00px;width:96.00px;height:39.80px;background:#d2f57f"></div>
<span class="t" style="left:1012.83px;top:220.60px;font-size:19px;line-height:21px;color:#fff;transform:scaleX(0.9886)">Minimal</span>
<span class="t" style="left:1224.53px;top:220.60px;font-size:19px;line-height:21px;color:#fff;transform:scaleX(0.9621);font-weight:700;-webkit-text-stroke:0.25px #fff">Optimal</span>
<span class="t" style="left:1417.30px;top:220.60px;font-size:19px;line-height:21px;color:#fff;transform:scaleX(0.8968)">Aggressive</span>
<span class="t" style="left:988.13px;top:313.80px;font-size:23.2px;line-height:26px;color:#fff;transform:scaleX(0.9277)">Saved costs</span>
<span class="t" style="left:1313.52px;top:320.50px;font-size:16px;line-height:17px;color:#fff;transform:scaleX(0.9526)">over</span>
<span class="t" style="left:1356.27px;top:313.80px;font-size:23.2px;line-height:26px;color:#fff;transform:scaleX(1.0082);font-weight:700;-webkit-text-stroke:0.25px #fff">6,774 € / year</span>
<span class="t" style="left:988.57px;top:368.30px;font-size:16px;line-height:17px;color:#fff;transform:scaleX(0.9144);font-weight:700;-webkit-text-stroke:0.25px #fff">Save on your SharePoint storage</span>
<span class="t" style="left:1428.07px;top:368.30px;font-size:16px;line-height:17px;color:#fff;transform:scaleX(0.9667);font-weight:700;-webkit-text-stroke:0.25px #fff">up to 23%</span>
<span class="t" style="left:988.08px;top:397.80px;font-size:16px;line-height:17px;color:#fff;transform:scaleX(0.9619)">Offloaded files</span>
<span class="t" style="left:1452.22px;top:397.80px;font-size:16px;line-height:17px;color:#fff;transform:scaleX(0.8793)">1.23 TB</span>
<span class="t" style="left:987.65px;top:427.80px;font-size:16px;line-height:17px;color:#fff;transform:scaleX(0.9193)">Removed versions</span>
<span class="t" style="left:1452.22px;top:427.80px;font-size:16px;line-height:17px;color:#fff;transform:scaleX(0.8793)">1.53 TB</span>
<span class="t" style="left:1234.13px;top:520.20px;font-size:19px;line-height:21px;color:#fff;transform:scaleX(0.9077)">Try archive for free</span>
<span class="t" style="left:1422.57px;top:520.20px;font-size:19px;line-height:21px;color:#3b3f6b;transform:scaleX(0.9332)">Cleanup</span>
</section>

<section class="card" id="card1" style="left:35px;top:600px;width:451px;height:398px"></section>
<section id="card1c">
<div class="abs" style="left:55.30px;top:682.30px;width:410.30px;height:1.00px;background:#e3e4f1"></div>
<div class="abs" style="left:55.30px;top:688.00px;width:132.50px;height:5.20px;background:#3b44c4"></div>
<div class="abs" style="left:189.30px;top:688.00px;width:104.20px;height:5.20px;background:#5f66d0"></div>
<div class="abs" style="left:295.40px;top:688.00px;width:77.40px;height:5.20px;background:#7d83d9"></div>
<div class="abs" style="left:374.30px;top:688.00px;width:71.30px;height:5.20px;background:#9fa3e2"></div>
<div class="abs" style="left:447.20px;top:688.00px;width:15.60px;height:5.20px;background:#bfc1ec"></div>
<div class="abs" style="left:464.40px;top:688.00px;width:1.20px;height:5.20px;background:#d4d5f2"></div>
<div class="abs" style="left:339.90px;top:923.10px;width:126.00px;height:40.00px;background:#3b44c4"></div>
<span class="t" style="left:56.43px;top:622.40px;font-size:18.8px;line-height:21px;color:#2d325a;transform:scaleX(0.9157);font-weight:700;-webkit-text-stroke:0.25px #2d325a">Analyzed data</span>
<span class="t" style="left:56.51px;top:664.90px;font-size:13.2px;line-height:15px;color:#3b3f6b;transform:scaleX(0.9193)">Total size</span>
<span class="t" style="left:417.65px;top:664.90px;font-size:13.2px;line-height:15px;color:#3b3f6b;transform:scaleX(0.9081)">11.99 TB</span>
<span class="t" style="left:56.70px;top:715.00px;font-size:16px;line-height:17px;color:#3b3f6b;transform:scaleX(0.9379)">Video</span>
<span class="t" style="left:425.07px;top:715.00px;font-size:16px;line-height:17px;color:#3b3f6b;transform:scaleX(0.8572)">3.9 TB</span>
<span class="t" style="left:54.23px;top:745.00px;font-size:16px;line-height:17px;color:#3b3f6b;transform:scaleX(0.9329)">Presentation</span>
<span class="t" style="left:416.76px;top:745.00px;font-size:16px;line-height:17px;color:#3b3f6b;transform:scaleX(0.8887)">3.11 TB</span>
<span class="t" style="left:54.68px;top:775.00px;font-size:16px;line-height:17px;color:#3b3f6b;transform:scaleX(0.9595)">Other</span>
<span class="t" style="left:424.85px;top:775.00px;font-size:16px;line-height:17px;color:#3b3f6b;transform:scaleX(0.8619)">2.3 TB</span>
<span class="t" style="left:55.20px;top:805.00px;font-size:16px;line-height:17px;color:#3b3f6b;transform:scaleX(0.9608)">Image</span>
<span class="t" style="left:416.54px;top:805.00px;font-size:16px;line-height:17px;color:#3b3f6b;transform:scaleX(0.8735)">2.13 TB</span>
<span class="t" style="left:54.20px;top:835.00px;font-size:16px;line-height:17px;color:#3b3f6b;transform:scaleX(0.9578)">Document</span>
<span class="t" style="left:398.86px;top:835.00px;font-size:16px;line-height:17px;color:#3b3f6b;transform:scaleX(0.8788)">509.17 GB</span>
<span class="t" style="left:54.26px;top:865.00px;font-size:16px;line-height:17px;color:#3b3f6b;transform:scaleX(0.9099)">Recycle bin</span>
<span class="t" style="left:425.65px;top:865.00px;font-size:16px;line-height:17px;color:#3b3f6b;transform:scaleX(0.8917)">57 GB</span>
<span class="t" style="left:56.70px;top:895.00px;font-size:16px;line-height:17px;color:#3b3f6b;transform:scaleX(0.9634)">Audio</span>
<span class="t" style="left:406.78px;top:895.00px;font-size:16px;line-height:17px;color:#3b3f6b;transform:scaleX(0.8773)">43.75 GB</span>
<span class="t" style="left:354.85px;top:932.60px;font-size:19px;line-height:21px;color:#fff;transform:scaleX(0.9263)">Show report</span>
</section>
<section class="card" id="card2" style="left:521px;top:600px;width:520.6px;height:398px"></section>
<section id="card2c">
<span class="t" style="left:540.73px;top:623.10px;font-size:18.8px;line-height:21px;color:#000;transform:scaleX(0.9621);font-weight:700;-webkit-text-stroke:0.25px #000">Optimal</span>
<span class="t" style="left:612.65px;top:623.10px;font-size:18.8px;line-height:21px;color:#000;transform:scaleX(0.9281)">archiving strategy</span>
<span class="t" style="left:540.58px;top:830.90px;font-size:15.6px;line-height:17px;color:#000;transform:scaleX(0.9830)">Offload files</span>
<span class="t" style="left:540.76px;top:851.40px;font-size:18.8px;line-height:21px;color:#000;transform:scaleX(0.9250);font-weight:700;-webkit-text-stroke:0.25px #000">older than 3 years</span>
<span class="t" style="left:540.17px;top:898.00px;font-size:15.6px;line-height:17px;color:#000;transform:scaleX(0.9309)">Remove versions</span>
<span class="t" style="left:540.75px;top:918.50px;font-size:18.8px;line-height:21px;color:#000;transform:scaleX(0.9338);font-weight:700;-webkit-text-stroke:0.25px #000">older than 1 year</span>
<p><span class="t" style="left:541.07px;top:668.90px;font-size:15.6px;line-height:17px;color:#000;transform:scaleX(0.9481)">The optimal strategy carefully balances the user experience and storage</span>
<span class="t" style="left:540.83px;top:688.90px;font-size:15.6px;line-height:17px;color:#000;transform:scaleX(0.9617)">costs. This strategy involves intelligently offloading files that have not</span>
<span class="t" style="left:540.35px;top:708.90px;font-size:15.6px;line-height:17px;color:#000;transform:scaleX(0.9758)">been modified in the near past.</span>
<span class="t" style="left:541.07px;top:728.90px;font-size:15.6px;line-height:17px;color:#000;transform:scaleX(0.9606)">The end result will be that the most active files remain be unchanged for</span>
<span class="t" style="left:541.30px;top:748.90px;font-size:15.6px;line-height:17px;color:#000;transform:scaleX(0.9461)">the users, while the older and less used files will be accessible through a</span>
<span class="t" style="left:541.06px;top:768.90px;font-size:15.6px;line-height:17px;color:#000;transform:scaleX(0.9849)">shortcut pointing to the archive.</span></p>
</section>
<section class="card" id="card3" style="left:1077px;top:600px;width:450px;height:398px"></section>
<section id="card3c">
<div class="abs" style="left:1097.00px;top:675.00px;width:5.00px;height:24.80px;background:#e1e1e1"></div>
<div class="abs" style="left:1245.00px;top:675.00px;width:4.80px;height:24.80px;background:#ff69c0"></div>
<div class="abs" style="left:1396.00px;top:675.00px;width:5.00px;height:24.80px;background:#e1e1e1"></div>
<div class="abs" style="left:1097.00px;top:730.20px;width:227.70px;height:6.60px;background:#fa32ad"></div>
<div class="abs" style="left:1327.00px;top:730.20px;width:180.00px;height:6.60px;background:#ff99d6"></div>
<div class="abs" style="left:1097.00px;top:883.60px;width:410.00px;height:1.00px;background:#e3e4f1"></div>
<div class="abs" style="left:1341.00px;top:908.90px;width:166.00px;height:39.90px;background:#3b44c4"></div>
<span class="t" style="left:1096.54px;top:622.90px;font-size:18.8px;line-height:21px;color:#000;transform:scaleX(0.9510);font-weight:700;-webkit-text-stroke:0.25px #000">Our optimization</span>
<span class="t" style="left:1121.04px;top:676.80px;font-size:18.8px;line-height:21px;color:#0a0a0a;transform:scaleX(0.9927)">Minimal</span>
<span class="t" style="left:1270.04px;top:676.80px;font-size:18.8px;line-height:21px;color:#000;transform:scaleX(0.9606);font-weight:700;-webkit-text-stroke:0.25px #000">Optimal</span>
<span class="t" style="left:1422.70px;top:676.80px;font-size:18.8px;line-height:21px;color:#0a0a0a;transform:scaleX(0.8923)">Aggressive</span>
<span class="t" style="left:1108.40px;top:744.20px;font-size:14.8px;line-height:16px;color:#0a0a0a;transform:scaleX(0.9567)">Versions 1.53 TB (56%)</span>
<span class="t" style="left:1372.41px;top:744.20px;font-size:14.8px;line-height:16px;color:#0a0a0a;transform:scaleX(0.9445)">Files 1.23 TB (44%)</span>
<span class="t" style="left:1096.57px;top:794.70px;font-size:18.8px;line-height:21px;color:#0a0a0a;transform:scaleX(0.9445)">Offloaded files</span>
<span class="t" style="left:1395.92px;top:794.70px;font-size:18.8px;line-height:21px;color:#000;transform:scaleX(0.9224);font-weight:700;-webkit-text-stroke:0.25px #000">1.23 TB</span>
<span class="t" style="left:1462.73px;top:794.70px;font-size:18.8px;line-height:21px;color:#0a0a0a;transform:scaleX(0.8779)">(44%)</span>
<span class="t" style="left:1096.07px;top:829.80px;font-size:18.8px;line-height:21px;color:#0a0a0a;transform:scaleX(0.9074)">Removed versions</span>
<span class="t" style="left:1395.92px;top:829.80px;font-size:18.8px;line-height:21px;color:#000;transform:scaleX(0.9224);font-weight:700;-webkit-text-stroke:0.25px #000">1.53 TB</span>
<span class="t" style="left:1462.73px;top:829.80px;font-size:18.8px;line-height:21px;color:#0a0a0a;transform:scaleX(0.8779)">(56%)</span>
<span class="t" style="left:1096.30px;top:918.30px;font-size:18.8px;line-height:21px;color:#000;transform:scaleX(0.9378);font-weight:700;-webkit-text-stroke:0.25px #000">Need more information?</span>
<span class="t" style="left:1355.92px;top:918.90px;font-size:19px;line-height:21px;color:#fff;transform:scaleX(0.9278)">Talk to our expert</span>
</section>

</div>
</body>
</html>
